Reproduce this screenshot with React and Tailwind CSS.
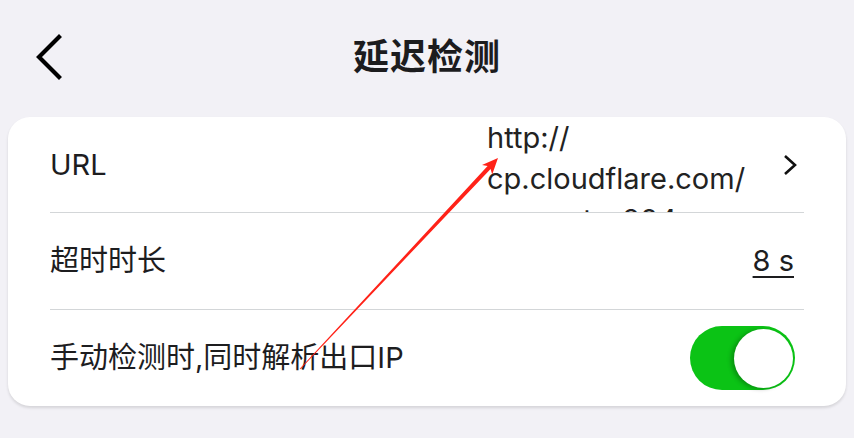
import React from 'react';

const FONT = { fontFamily: '"Inter", "Noto Sans CJK SC", sans-serif' };

function BackIcon() {
  return (
    <svg width="30" height="46" viewBox="0 0 30 46" className="text-black">
      <polyline points="24,3 4,23 24,43" fill="none" stroke="currentColor" strokeWidth="4.2" strokeLinecap="square" />
    </svg>
  );
}

function ChevronRight() {
  return (
    <svg width="16" height="24" viewBox="0 0 16 24">
      <polyline points="3,3 13,12 3,21" fill="none" stroke="#111" strokeWidth="2.6" />
    </svg>
  );
}

export default function App() {
  return (
    <div className="relative w-[854px] h-[438px] overflow-hidden bg-[#f2f1f6] text-[#1d1d1f]" style={FONT}>
      {/* Header */}
      <div className="relative h-[114px] flex items-center justify-center">
        <div className="absolute left-[35px] top-[34px]">
          <BackIcon />
        </div>
        <h1 className="text-[36px] font-bold tracking-[1px] text-[#1c1c1e]">延迟检测</h1>
      </div>

      {/* Card */}
      <div className="mx-[8px] mt-[3px] bg-white rounded-[22px] px-[42px] shadow-[0_2px_3px_rgba(0,0,0,0.12)]">
        <div className="h-[96px] flex border-b border-[#d3d6d8] overflow-hidden">
          <div className="w-[437px] self-center text-[29px]">URL</div>
          <div className="flex-1 self-start text-[29px] leading-[41px] text-[#222]">
            <div>http://</div>
            <div>cp.cloudflare.com/</div>
            <div>generate_204</div>
          </div>
          <div className="self-center pt-[1px] mr-[6px]">
            <ChevronRight />
          </div>
        </div>

        <div className="h-[97px] flex items-center border-b border-[#d3d6d8]">
          <div className="text-[29px]">超时时长</div>
          <div className="ml-auto mr-[10px] text-[29px] underline decoration-2 underline-offset-[5px]">8 s</div>
        </div>

        <div className="h-[96px] flex items-center">
          <div className="text-[29px]">手动检测时,同时解析出口IP</div>
          <div className="ml-auto mr-[9px] w-[105px] h-[64px] rounded-full bg-[#0bc315] flex items-center justify-end pr-[2px]">
            <div className="w-[59px] h-[59px] rounded-full bg-white shadow-[-3px_1px_4px_rgba(0,0,0,0.25)]" />
          </div>
        </div>
      </div>

      {/* Annotation arrow */}
      <svg className="absolute left-0 top-0 pointer-events-none" width="854" height="438" viewBox="0 0 854 438">
        <polygon
          points="300.3,369.2 490.6,168.9 492.2,174.5 498,158 482,164.9 487.6,166.1 299.7,368.8"
          fill="#ff2218"
        />
      </svg>
    </div>
  );
}
